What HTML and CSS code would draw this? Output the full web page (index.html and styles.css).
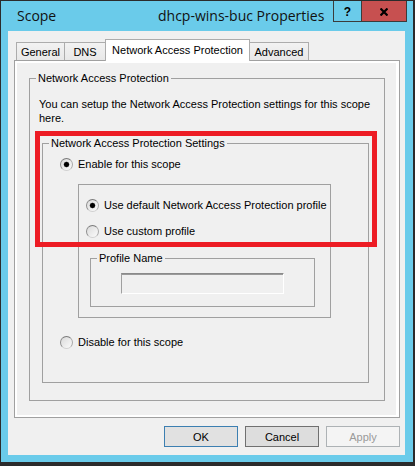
FILE: index.html
```html
<!DOCTYPE html>
<html lang="en">
<head>
<meta charset="utf-8">
<title>Scope dhcp-wins-buc Properties</title>
<link rel="stylesheet" href="styles.css">
</head>
<body>
<div class="window">
  <div class="titlebar">
    <span class="app-name">Scope</span>
    <span class="caption">dhcp-wins-buc Properties</span>
    <div class="caption-buttons">
      <div class="cap-btn help">?</div>
      <div class="cap-btn close">
        <svg width="8" height="8" viewBox="0 0 8 8"><path d="M0.5 0.5 L7.5 7.5 M7.5 0.5 L0.5 7.5" stroke="#000" stroke-width="2.2" fill="none"/></svg>
      </div>
    </div>
  </div>
  <div class="client">
    <div class="tabs">
      <div class="tab t-general">General</div>
      <div class="tab t-dns">DNS</div>
      <div class="tab t-nap selected">Network Access Protection</div>
      <div class="tab t-adv">Advanced</div>
    </div>
    <div class="page">
      <fieldset class="group g-outer">
        <legend>Network Access Protection</legend>
        <p class="desc">You can setup the Network Access Protection settings for this scope<br>here.</p>
        <fieldset class="group g-settings">
          <legend>Network Access Protection Settings</legend>
          <label class="opt opt-enable"><input type="radio" class="radio" name="nap" checked><span>Enable for this scope</span></label>
          <div class="subgroup">
            <label class="opt opt-default"><input type="radio" class="radio" name="profile" checked><span>Use default Network Access Protection profile</span></label>
            <label class="opt opt-custom"><input type="radio" class="radio" name="profile"><span>Use custom profile</span></label>
            <fieldset class="group g-profile">
              <legend>Profile Name</legend>
              <input class="textbox" type="text" disabled>
            </fieldset>
          </div>
          <label class="opt opt-disable"><input type="radio" class="radio" name="nap"><span>Disable for this scope</span></label>
        </fieldset>
      </fieldset>
      <div class="highlight"></div>
    </div>
    <div class="buttons">
      <button class="btn btn-default" type="button">OK</button>
      <button class="btn btn-cancel" type="button">Cancel</button>
      <button class="btn btn-apply" type="button" disabled>Apply</button>
    </div>
  </div>
</div>
</body>
</html>
```

FILE: styles.css
```css
* { box-sizing: border-box; }

html, body {
  margin: 0;
  padding: 0;
}

body {
  width: 415px;
  height: 466px;
  overflow: hidden;
  background: #2b2b2b;
  font-family: "Liberation Sans", Arial, sans-serif;
  font-size: 11px;
  color: #000;
}

.window {
  margin: 1px 2px 0 1px;
  height: 461px;
  background: #6acbea;
  display: flex;
  flex-direction: column;
}

/* title bar */
.titlebar {
  flex: none;
  height: 30px;
  display: flex;
  align-items: flex-start;
}

.app-name,
.caption {
  font-family: "Open Sans", "Noto Sans", sans-serif;
  font-size: 14px;
  line-height: 19px;
  margin-top: 5px;
  color: #111;
  white-space: nowrap;
}

.app-name {
  margin-left: 16px;
  width: 141px;
}

.caption-buttons {
  margin-left: auto;
  margin-right: 6px;
  display: flex;
}

.cap-btn {
  height: 21px;
  border: 1px solid #3b3b3b;
  border-top: none;
  display: flex;
  align-items: center;
  justify-content: center;
}

.help {
  width: 28px;
  border-right: none;
  font-family: "Liberation Sans", Arial, sans-serif;
  font-weight: bold;
  font-size: 12px;
  padding-top: 1px;
}

.close {
  width: 46px;
  background: #c75050;
}

.close svg {
  margin-top: 2px;
}

/* client area */
.client {
  flex: 1;
  margin: 0 8px 7px 7px;
  background: #f0f0f0;
  padding: 8px 5px 8px 6px;
  display: flex;
  flex-direction: column;
}

.tabs {
  flex: none;
  height: 21px;
  padding-left: 2px;
  display: flex;
  align-items: flex-end;
  position: relative;
  z-index: 1;
}

.tab {
  height: 18px;
  margin-right: -1px;
  border: 1px solid #acacac;
  border-bottom: none;
  background: linear-gradient(#f2f2f2, #e8e8e8);
  display: flex;
  align-items: center;
  justify-content: center;
  white-space: nowrap;
}

.tab.selected {
  height: 22px;
  margin-bottom: -1px;
  background: #fff;
  padding-bottom: 2px;
  position: relative;
  z-index: 2;
}

.t-general { width: 49px; }
.t-dns { width: 42px; }
.t-nap { width: 145px; }
.t-adv { width: 60px; }

.page {
  flex: none;
  height: 358px;
  border: 1px solid #a0a0a0;
  background: #f0f0f0;
  box-shadow: inset 2px 0 #fff, inset -3px 0 #fff, inset 0 -2px #fff, inset 0 2px #fff;
  padding: 11px 14px 16px 14px;
  position: relative;
}

/* group boxes */
.group {
  margin: 0;
  padding: 0;
  border: 1px solid #a0a0a0;
  min-inline-size: 0;
}

.group > legend {
  margin-left: 6px;
  padding: 0 2px;
  line-height: 13px;
  font-size: 11px;
}

.desc {
  margin: 12px 0 0 9px;
  line-height: 14px;
}

.g-settings {
  margin: 12px 15px 17px 12px;
  padding-bottom: 33px;
}

.opt {
  display: flex;
  align-items: center;
  gap: 5px;
  height: 13px;
  line-height: 13px;
  white-space: nowrap;
}

.opt-enable { margin: 8px 0 0 17px; }
.opt-disable { margin: 18px 0 0 17px; }
.opt-default { margin: 14px 0 0 7px; }
.opt-custom { margin: 13px 0 0 7px; }

.radio {
  -webkit-appearance: none;
  appearance: none;
  flex: none;
  margin: 0;
  width: 13px;
  height: 13px;
  border-radius: 50%;
  border: 1px solid;
  border-color: #7b7b7b #a8a8a8 #d0d0d0 #8c8c8c;
  background: linear-gradient(135deg, #dadada, #fbfbfb);
}

.radio:checked {
  background:
    radial-gradient(circle, #000 0, #000 2px, #555 2.6px, transparent 3.2px),
    linear-gradient(135deg, #dadada, #fbfbfb);
}

.subgroup {
  margin: 13px 37px 0 35px;
  border: 1px solid #a0a0a0;
}

.g-profile {
  margin: 14px 15px 10px 11px;
}

.textbox {
  display: block;
  margin: 8px 0 12px 30px;
  width: 163px;
  height: 21px;
  padding: 0;
  border: 1px solid;
  border-color: #8a8a8a #ffffff #ffffff #a0a0a0;
  box-shadow: inset 0 1px 0 #9a9a9a;
  background: #f0f0f0;
}

.highlight {
  position: absolute;
  left: 20px;
  top: 70px;
  width: 342px;
  height: 116px;
  border: 5px solid #ed1c24;
}

/* dialog buttons */
.buttons {
  flex: none;
  margin-top: 8px;
  display: flex;
  justify-content: flex-end;
  gap: 7px;
}

.btn {
  width: 74px;
  height: 21px;
  padding: 0;
  border: 1px solid #adadad;
  background: #e1e1e1;
  font-family: "Liberation Sans", Arial, sans-serif;
  font-size: 11px;
  color: #000;
}

.btn-default {
  border-color: #3c7fb1;
}

.btn-cancel {
  border-color: #707070;
  background: #dddddd;
}

.btn-apply {
  border-color: #adb2b5;
  background: #f4f4f4;
  color: #9a9a9a;
}
```
